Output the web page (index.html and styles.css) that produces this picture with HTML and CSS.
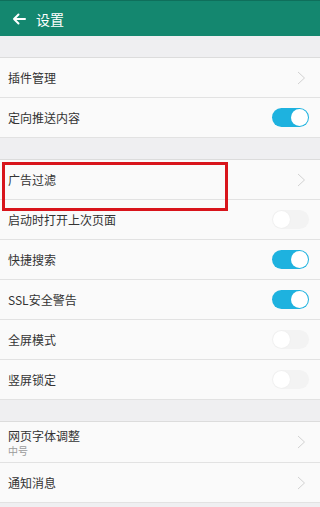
FILE: index.html
```html
<!DOCTYPE html>
<html lang="zh">

<head>
    <meta charset="UTF-8">
    <meta name="viewport" content="width=device-width, initial-scale=1.0">
    <title>设置</title>
    <link rel="stylesheet" href="styles.css">
</head>

<body>
    <!-- Üst bar -->
    <header class="topbar">
        <svg class="back" width="14" height="12" viewBox="0 0 14 12">
            <path d="M13 6H2M6.5 1.5L2 6l4.5 4.5" fill="none" stroke="#fff" stroke-width="2" stroke-linecap="round" stroke-linejoin="round"/>
        </svg>
        <span class="title">设置</span>
    </header>

    <div class="band"></div>
    <div class="row"><span class="label">插件管理</span><svg class="chev" width="9" height="14" viewBox="0 0 9 14"><path d="M1 1l6.5 6L1 13" fill="none" stroke="#d2d2d2" stroke-width="1"/></svg></div>
    <div class="row"><span class="label">定向推送内容</span><span class="switch on"></span></div>

    <div class="band"></div>
    <div class="row highlight"><span class="label">广告过滤</span><svg class="chev" width="9" height="14" viewBox="0 0 9 14"><path d="M1 1l6.5 6L1 13" fill="none" stroke="#d2d2d2" stroke-width="1"/></svg><div class="mark"></div></div>
    <div class="row"><span class="label">启动时打开上次页面</span><span class="switch"></span></div>
    <div class="row"><span class="label">快捷搜索</span><span class="switch on"></span></div>
    <div class="row"><span class="label">SSL安全警告</span><span class="switch on"></span></div>
    <div class="row"><span class="label">全屏模式</span><span class="switch"></span></div>
    <div class="row"><span class="label">竖屏锁定</span><span class="switch"></span></div>

    <div class="band"></div>
    <div class="row tall">
        <div class="stack">
            <span class="label">网页字体调整</span>
            <span class="sub">中号</span>
        </div>
        <svg class="chev" width="9" height="14" viewBox="0 0 9 14"><path d="M1 1l6.5 6L1 13" fill="none" stroke="#d2d2d2" stroke-width="1"/></svg>
    </div>
    <div class="row"><span class="label">通知消息</span><svg class="chev" width="9" height="14" viewBox="0 0 9 14"><path d="M1 1l6.5 6L1 13" fill="none" stroke="#d2d2d2" stroke-width="1"/></svg></div>
</body>

</html>
```

FILE: styles.css
```css
* {
    margin: 0;
    padding: 0;
    box-sizing: border-box;
}

body {
    font-family: "Noto Sans CJK SC", "Noto Sans", sans-serif;
    background: #efeff1;
    width: 320px;
    min-height: 507px;
    overflow: hidden;
}

.topbar {
    height: 36px;
    background: #14876f;
    border-top: 1px solid #0f6f5b;
    display: flex;
    align-items: center;
    padding-left: 12px;
    gap: 10px;
    color: #fff;
}

.topbar .title {
    font-size: 14px;
}

.band {
    height: 22px;
    background: #efeff1;
    border-bottom: 1px solid #dcdcdc;
}

.row {
    position: relative;
    height: 40px;
    background: #fafafa;
    border-bottom: 1px solid #e2e2e2;
    display: flex;
    align-items: center;
    justify-content: space-between;
    padding: 0 11px 0 8px;
}

.row.tall {
    height: 41px;
}

.label {
    font-size: 12px;
    color: #333;
}

.stack {
    display: flex;
    flex-direction: column;
}

.stack .label {
    line-height: 16px;
}

.sub {
    font-size: 10px;
    line-height: 13px;
    color: #9a9a9a;
}

.chev {
    margin-right: 3px;
}

.switch {
    position: relative;
    width: 37px;
    height: 19px;
    border-radius: 10px;
    background: #f3f3f3;
}

.switch::after {
    content: "";
    position: absolute;
    top: 1px;
    left: 1px;
    width: 17px;
    height: 17px;
    border-radius: 50%;
    background: #fff;
    box-shadow: 0 0 2px rgba(0, 0, 0, 0.05);
}

.switch.on {
    background: #1eb2df;
}

.switch.on::after {
    left: 19px;
    box-shadow: none;
}

.mark {
    position: absolute;
    left: 2px;
    top: 2px;
    width: 226px;
    height: 49px;
    border: 3px solid #d8141b;
    z-index: 2;
}
```
